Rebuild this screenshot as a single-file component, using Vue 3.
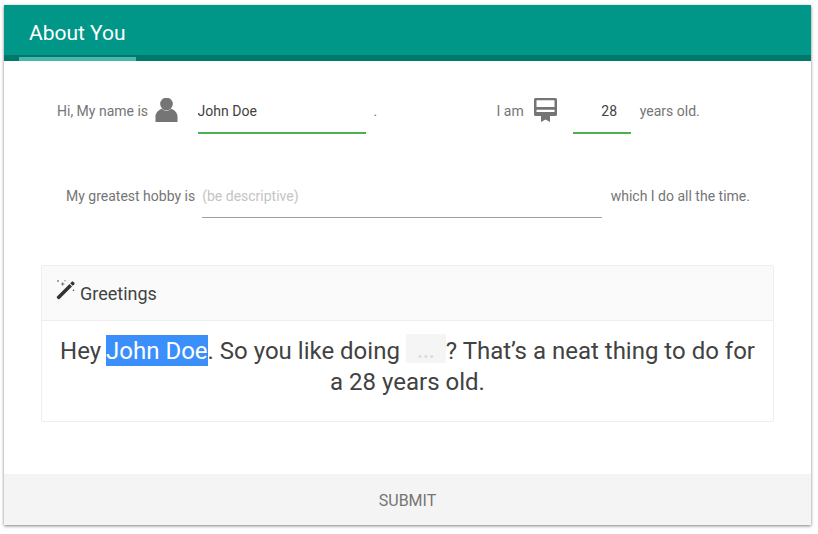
<script setup>
import { ref } from 'vue'
const name = ref('John Doe')
const age = ref(28)
const hobby = ref('')
</script>

<template>
  <div class="page">
    <div class="card">
      <header class="toolbar">
        <div class="tab">About You</div>
      </header>
      <main class="content">
        <div class="row row-one">
          <span class="label">Hi, My name is</span>
          <svg class="icon person" viewBox="0 0 24 24" width="24" height="24">
            <circle cx="11.500" cy="6" r="6.300" fill="#757575" />
            <path d="M.5 24v-5.500C.5 14.800 3.400 12.200 6.800 10.800c1.300 1.200 2.900 2 4.700 2s3.400-.8 4.700-2c3.400 1.400 6.300 4 6.300 7.700V24z" fill="#757575" />
          </svg>
          <div class="field name-field"><input v-model="name" class="input" /></div>
          <span class="label dot">.</span>
          <span class="label iam">I am</span>
          <svg class="icon cert" viewBox="0 0 24 24" width="24" height="24">
            <path d="M1.500 0h20A1.500 1.500 0 0 1 23 1.500v15a1.500 1.500 0 0 1-1.500 1.500H16v6l-4.500-2.500L7 24v-6H1.500A1.500 1.500 0 0 1 0 16.500v-15A1.500 1.500 0 0 1 1.500 0zM2.500 2.200V9h18V2.200zM2.500 11.700V14h18v-2.300z" fill="#757575" fill-rule="evenodd" />
          </svg>
          <div class="field age-field"><input v-model="age" class="input age-input" /></div>
          <span class="label years">years old.</span>
        </div>
        <div class="row row-two">
          <span class="label">My greatest hobby is</span>
          <div class="field hobby-field"><input v-model="hobby" class="input hobby-input" placeholder="(be descriptive)" /></div>
          <span class="label">which I do all the time.</span>
        </div>
        <section class="panel">
          <div class="panel-heading">
            <svg class="wand" viewBox="0 0 20 20" width="20" height="20">
              <path d="M1 16.500 13.500 4l2.500 2.500L3.500 19a1 1 0 0 1-1.400 0L1 17.900a1 1 0 0 1 0-1.400z" fill="#333" />
              <path d="M14.200 3.300 15.800 1.700a1 1 0 0 1 1.400 0l1.100 1.100a1 1 0 0 1 0 1.400L16.700 5.800z" fill="#333" />
              <path d="M6.700 2.300v3.400M5 4h3.400M2 .3v1.500M1.200 1h1.600M9 0v1.300M17.500 9.500v1.600M16.700 10.300h1.600" stroke="#555" stroke-width=".8" />
            </svg>
            <span>Greetings</span>
          </div>
          <div class="panel-body">
            Hey <span class="selected">{{ name }}</span>. So you like doing <span class="blank">...</span>? That’s a neat thing to do for a {{ age }} years old.
          </div>
        </section>
      </main>
      <footer class="footer">SUBMIT</footer>
    </div>
  </div>
</template>

<style>
html, body { margin: 0; background: #fff; }
</style>

<style scoped>
.page {
  width: 818px;
  height: 534px;
  padding: 5px 7px 9px 4px;
  box-sizing: border-box;
  font-family: Roboto, sans-serif;
  overflow: hidden;
}
.card {
  height: 520px;
  display: flex;
  flex-direction: column;
  background: #fff;
  box-shadow: 0 1px 3px rgba(0, 0, 0, .5);
}
.toolbar {
  height: 56px;
  box-sizing: border-box;
  background: #009688;
  border-bottom: 6px solid #00796b;
  padding-left: 15px;
  flex: none;
}
.tab {
  width: 117px;
  height: 56px;
  box-sizing: border-box;
  padding: 16px 0 0 10px;
  border-bottom: 4px solid #4db6ac;
  color: #fff;
  font-size: 21px;
  line-height: 24px;
}
.content {
  flex: 1;
  padding: 0 37px;
}
.row {
  display: flex;
  align-items: center;
  color: #757575;
  font-size: 14px;
}
.row-one {
  height: 72px;
  margin-top: 14px;
  padding-left: 16px;
}
.row-two {
  height: 72px;
  margin-top: 13px;
  padding-left: 25px;
}
.label { white-space: nowrap; line-height: 20px; position: relative; top: -0.500px; }
.icon { flex: none; }
.person { margin: 0 19px 0 6.500px; position: relative; top: -1px; }
.cert { margin: 0 15px 0 10.500px; position: relative; top: -1px; }
.dot { margin-left: 8px; width: 123px; }
.field {
  border-bottom: 2px solid #4caf50;
  box-sizing: border-box;
  height: 44px;
  display: flex;
  align-items: center;
  position: relative;
  top: 1px;
}
.input {
  border: 0;
  outline: 0;
  padding: 0;
  background: transparent;
  font: 14px Roboto, sans-serif;
  color: #424242;
  width: 100%;
  height: 42px;
}
.name-field { width: 168px; }
.age-field { width: 58px; margin-right: 8.500px; }
.age-input { padding-left: 28px; box-sizing: border-box; }
.hobby-field {
  width: 400px;
  margin: 0 8.500px 0 7px;
  border-bottom: 1px solid #9e9e9e;
  top: 0;
}
.hobby-input::placeholder { color: #c4c4c4; opacity: 1; }
.hobby-input { box-sizing: border-box; }
.panel {
  margin-top: 33px;
  height: 157px;
  box-sizing: border-box;
  border: 1px solid #eee;
  border-radius: 2px;
}
.panel-heading {
  height: 55px;
  box-sizing: border-box;
  background: #fafafa;
  border-bottom: 1px solid #eee;
  padding: 0 14px;
  display: flex;
  align-items: center;
  font-size: 18px;
  color: #424242;
}
.wand { margin-right: 4px; position: relative; top: -3px; }
.panel-body {
  padding: 15px 15px;
  text-align: center;
  font-size: 24px;
  line-height: 31px;
  color: #424242;
}
.selected { background: #3a8ffa; color: #fff; padding: 2px 0 1px; margin-left: -1px; }
.blank {
  display: inline-block;
  width: 40px;
  height: 29px;
  line-height: 34px;
  margin: -4px 0;
  background: #f5f5f5;
  color: #dcdcdc;
  font-size: 20px;
  font-weight: 700;
  vertical-align: 1px;
}
.footer {
  height: 51px;
  flex: none;
  box-sizing: border-box;
  padding-top: 2px;
  background: #f4f4f4;
  display: flex;
  align-items: center;
  justify-content: center;
  color: #757575;
  font-size: 16px;
}
</style>
